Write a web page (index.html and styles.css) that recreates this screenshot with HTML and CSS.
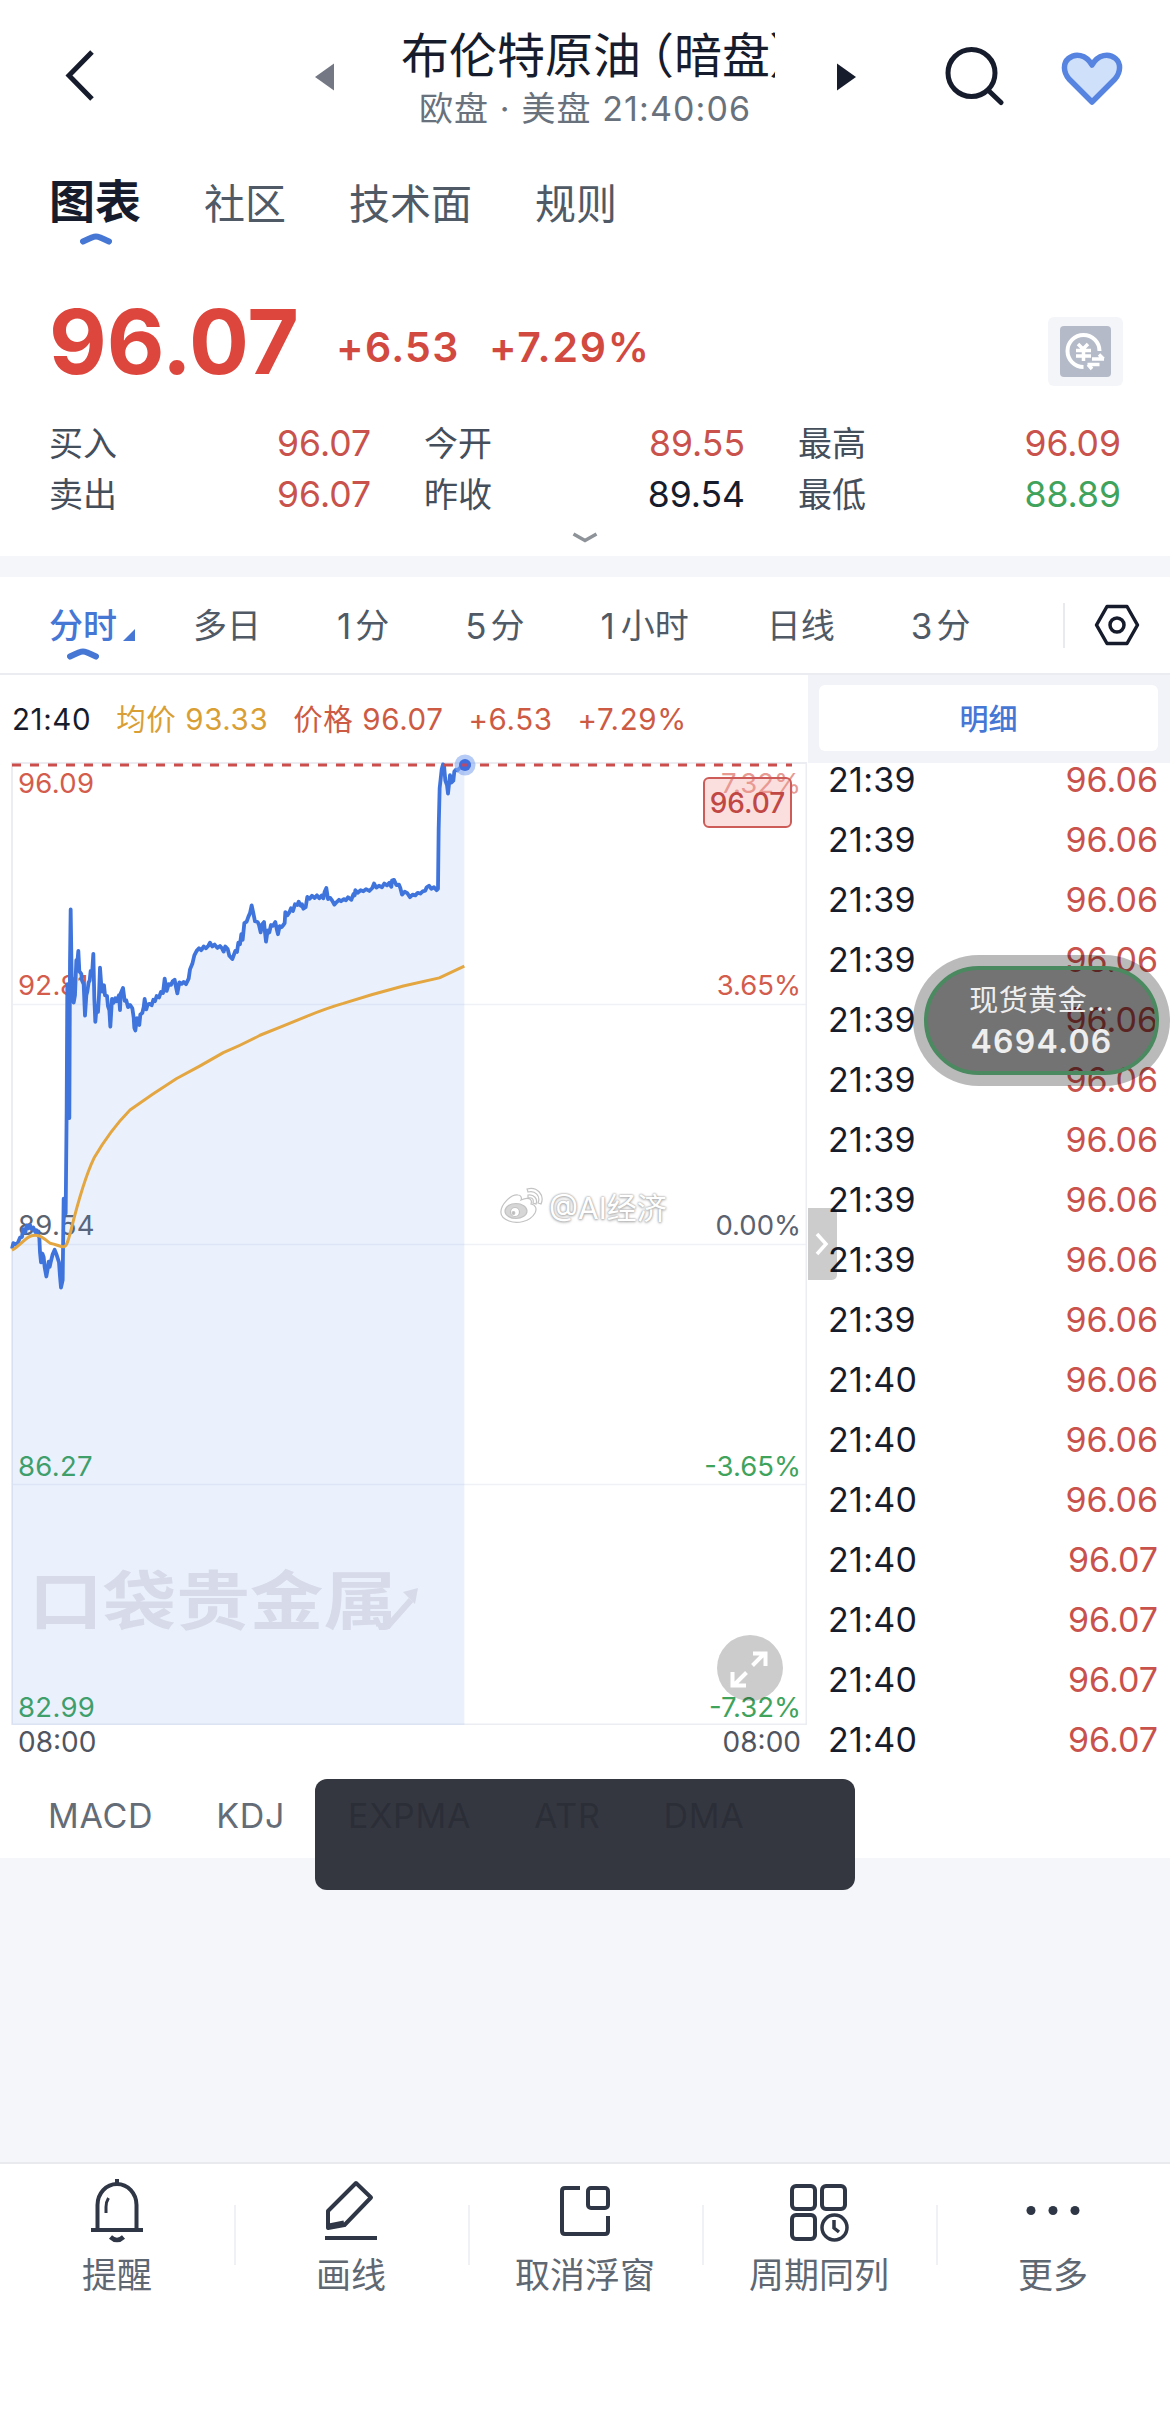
FILE: index.html
```html
<!DOCTYPE html>
<html lang="zh-CN">
<head>
<meta charset="utf-8">
<title>布伦特原油</title>
<link rel="stylesheet" href="styles.css">
</head>
<body>
<div class="app">
  <header class="header">
    <svg class="back" width="40" height="60" viewBox="0 0 40 60"><path d="M31 7 8 30.500 31 54" fill="none" stroke="#171c2c" stroke-width="5"/></svg>
    <svg class="prev" width="20" height="28" viewBox="0 0 20 28"><path d="M19 .5v27L0 14z" fill="#737884"/></svg>
    <div class="heading">
      <div class="title">布伦特原油<span class="paren">（</span>暗盘<span class="paren-end">）</span></div>
      <div class="session">欧盘 · 美盘 21:40:06</div>
    </div>
    <svg class="next" width="20" height="28" viewBox="0 0 20 28"><path d="M1 .5v27L20 14z" fill="#171c2c"/></svg>
    <svg class="search" width="64" height="64" viewBox="0 0 64 64" fill="none" stroke="#171c2c" stroke-width="5" stroke-linecap="round"><circle cx="29.500" cy="31" r="23.500"/><path d="m47.500 49.500 11.500 11"/></svg>
    <svg class="heart" width="64" height="58" viewBox="0 0 64 58"><path d="M32 52 9 29C3 22 3 13 8.500 8.500 15 3 26 4 32 15 38 4 49 3 55.500 8.500 61 13 61 22 55 29z" fill="#cfe0fb" stroke="#5684e0" stroke-width="5.500" stroke-linejoin="round"/></svg>
  </header>

  <nav class="tabs">
    <span class="tab active">图表<svg class="caret" width="32" height="12" viewBox="0 0 32 12"><path d="M3 8.500Q13 3.500 16 3.500T29 8.500" fill="none" stroke="#4677d5" stroke-width="6" stroke-linecap="round"/></svg></span>
    <span class="tab">社区</span><span class="tab">技术面</span><span class="tab">规则</span>
  </nav>

  <section class="quote">
    <div class="price-row">
      <span class="price">96.07</span><span class="change">+6.53</span><span class="change pct">+7.29%</span>
      <div class="convert">
        <svg width="51" height="51" viewBox="0 0 51 51"><rect width="51" height="51" rx="4" fill="#b4bac8"/><g fill="none" stroke="#fff"><path d="M23.500 41A16 16 0 1 1 39.500 25" stroke-width="4"/><path d="m18 18 5 5 5-5M16 24.500h15M16 30h15M23.500 23v12" stroke-width="3.500"/><path d="M27.500 38.500h12M32 43l-4-4.500M32 33h12M39 28.500l4.500 4.500" stroke-width="3.500"/></g></svg>
      </div>
    </div>
    <div class="stats">
      <div class="stat"><span>买入</span><b class="up">96.07</b></div>
      <div class="stat"><span>今开</span><b class="up">89.55</b></div>
      <div class="stat"><span>最高</span><b class="up">96.09</b></div>
      <div class="stat"><span>卖出</span><b class="up">96.07</b></div>
      <div class="stat"><span>昨收</span><b>89.54</b></div>
      <div class="stat"><span>最低</span><b class="down">88.89</b></div>
    </div>
    <svg class="more-stats" width="28" height="14" viewBox="0 0 28 14"><path d="M2.500 3 14 9.500 25.500 3" fill="none" stroke="#8d9399" stroke-width="3.500"/></svg>
  </section>

  <nav class="periods">
    <span class="period active">分时<i class="corner"></i><svg class="caret" width="32" height="12" viewBox="0 0 32 12"><path d="M3 8.500Q13 3.500 16 3.500T29 8.500" fill="none" stroke="#4677d5" stroke-width="6" stroke-linecap="round"/></svg></span>
    <span class="period">多日</span><span class="period"><i class="num">1</i>分</span><span class="period"><i class="num">5</i>分</span><span class="period"><i class="num">1</i>小时</span><span class="period">日线</span><span class="period"><i class="num">3</i>分</span>
    <span class="settings"><svg width="46" height="44" viewBox="0 0 46 44" fill="none" stroke="#171c2c" stroke-width="3.500" stroke-linejoin="round"><path d="M13 3.500h20L43.500 22 33 40.500H13L2.500 22z"/><circle cx="23" cy="22" r="7"/></svg></span>
  </nav>

  <main class="market">
    <section class="chart-panel">
      <div class="legend">
        <span class="now">21:40</span><span class="avg">均价 93.33</span><span class="last">价格 96.07</span><span class="last">+6.53</span><span class="last">+7.29%</span>
      </div>
      <div class="chart">
        <svg class="logo-arrow" width="40" height="42" viewBox="0 0 40 42"><path d="M1 38h7L31 12" fill="none" stroke="#d7dae8" stroke-width="6"/><path d="M23 4 38 0 35 16z" fill="#d7dae8"/></svg>
        <div class="axis left">
          <span class="up">96.09</span><span class="up">92.81</span><span>89.54</span><span class="down">86.27</span><span class="down">82.99</span>
        </div>
        <div class="axis right">
          <span class="up faint">7.32%</span><span class="up">3.65%</span><span>0.00%</span><span class="down">-3.65%</span><span class="down">-7.32%</span>
        </div>
        <svg class="plot" width="807" height="985" viewBox="0 740 807 985">
          <path d="M12 1004.500H806M12 1244.500H806M12 1484.500H806" stroke="#f0f1f6" stroke-width="1.500"/>
          <path d="M12 763V1724.500H806.500V763z" fill="none" stroke="#ebedf3" stroke-width="2"/>
          <g transform="translate(0 740) scale(.33333 .36997)" fill="none" stroke-linejoin="round">
            <path class="area" d="M36 1375 42 1362 52 1360 60 1345 66 1343 72 1320 80 1312 90 1311 100 1318 110 1325 118 1345 120 1385 124 1412 127 1388 134 1425 139 1450 146 1410 152 1412 158 1390 164 1378 170 1392 177 1412 183 1480 188 1460 191 1240 197 1280 200 1000 202 660 208 1022 212 458 221 710 225 690 229 595 235 570 238 625 246 650 255 745 259 690 266 655 272 624 276 625 280 578 286 762 294 735 300 615 307 670 312 663 318 690 324 700 331 775 336 710 350 700 357 690 360 730 362 685 369 670 374 705 384 715 397 718 401 750 406 785 411 768 418 770 423 730 435 705 445 718 455 712 465 695 475 692 487 680 494 645 500 675 510 655 524 648 532 685 538 655 558 655 566 640 575 605 590 570 610 562 630 550 650 557 670 565 680 560 697 592 706 570 715 550 727 530 735 495 745 478 755 447 765 490 775 492 782 520 790 492 798 545 805 510 826 492 834 525 842 500 850 502 858 465 870 462 878 455 890 440 900 442 910 455 922 424 945 422 965 425 979 400 984 428 995 430 1003 445 1015 434 1035 430 1055 430 1066 408 1085 408 1110 404 1122 390 1145 392 1170 390 1180 380 1190 390 1200 395 1210 418 1220 412 1230 425 1260 415 1275 405 1287 395 1300 400 1314 402 1319 130 1325 80 1332 66 1336 110 1344 145 1350 100 1360 110 1368 80 1380 75 1393 67V2662H36z"/>
            <path class="line" vector-effect="non-scaling-stroke" d="M36 1375 40 1360 48 1364 54 1358 60 1345 66 1343 69 1322 76 1330 80 1312 85 1320 90 1311 95 1322 100 1318 106 1330 110 1325 118 1345 120 1385 123 1412 127 1388 131 1398 134 1425 139 1450 143 1430 146 1410 149 1424 152 1412 158 1390 164 1378 170 1392 177 1412 180 1450 183 1480 188 1460 191 1240 197 1280 200 1000 202 660 205 800 208 1022 210 600 212 458 215 640 221 710 225 690 229 595 232 600 235 570 238 625 244 632 246 650 251 660 255 745 259 690 262 680 266 655 269 650 272 624 276 635 280 578 283 700 286 762 290 720 294 735 297 690 300 615 304 665 307 680 312 663 315 690 321 692 324 720 328 730 331 775 336 700 341 710 346 698 350 706 357 690 360 730 362 685 369 670 374 705 379 704 384 722 390 716 397 725 401 750 403 778 406 785 411 752 414 765 418 770 421 742 427 738 431 722 434 700 439 728 443 715 449 713 455 717 460 702 465 706 470 692 477 696 483 681 489 684 494 645 500 678 506 660 513 662 518 652 524 648 528 668 532 685 538 655 545 659 551 654 558 660 566 645 570 620 577 605 583 582 590 570 597 563 604 568 611 558 618 563 625 556 630 548 637 558 644 553 652 562 660 557 666 563 671 572 676 558 683 565 688 583 697 592 706 570 711 573 715 548 720 552 724 525 728 540 733 495 740 491 745 478 750 468 755 447 760 468 765 490 773 492 777 500 782 520 787 498 792 492 795 520 798 545 803 515 808 520 813 500 819 502 826 492 830 510 834 525 839 503 845 506 850 500 854 495 856 465 862 474 868 466 873 455 879 462 885 444 892 446 896 437 902 448 906 444 910 456 917 452 922 424 929 429 936 421 944 427 951 420 958 428 965 420 970 428 974 410 979 400 984 430 991 427 997 435 1003 445 1010 438 1017 432 1023 436 1031 430 1038 433 1044 425 1054 432 1060 417 1064 420 1066 406 1073 413 1082 406 1090 409 1098 403 1108 408 1117 400 1122 388 1129 399 1137 394 1146 398 1153 388 1161 393 1168 386 1174 397 1176 380 1182 378 1189 392 1197 391 1201 400 1206 418 1214 410 1222 414 1230 425 1238 418 1246 420 1253 413 1261 415 1268 409 1276 407 1280 398 1287 394 1294 402 1302 398 1310 406 1314 402 1316 240 1319 130 1325 80 1329 66 1332 68 1336 110 1341 122 1344 145 1350 95 1354 115 1360 110 1363 85 1368 80 1372 82 1380 75 1393 67"/>
            <path d="M36 1379C60 1368 75 1345 95 1340S125 1343 150 1360C170 1363 180 1370 190 1370 198 1370 202 1363 212 1328Q250 1190 282 1130 330 1055 390 1000 460 955 530 915 600 882 670 845 730 822 780 798 850 773 920 747 980 725 1030 712 1120 686 1210 665L1318 643 1393 611" stroke="#e3a640" stroke-width="3" vector-effect="non-scaling-stroke"/>
          </g>
          <path d="M12 765H792" stroke="#cb4d4c" stroke-width="3" stroke-dasharray="9 9"/>
          <circle cx="465" cy="765" r="10.500" fill="#86a8ee" fill-opacity=".6"/><circle cx="465" cy="765" r="6" fill="#3d6ddc"/><path d="M462 765h5" stroke="#b44c70" stroke-width="3"/>
        </svg>
        <div class="brand">口袋贵金属</div>
        <div class="price-tag">96.07</div>
        <div class="credit">
          <svg width="46" height="38" viewBox="0 0 46 38" fill="#fff" stroke="#c3c3c3" stroke-width="1.200"><path d="M2 26C1 18 12 7 19 8c3 0 4 3 3 5 6-3 12-2 10 4 5 1 6 5 4 9-5 9-18 11-26 8-5-2-8-5-8-8z"/><ellipse cx="17" cy="24" rx="11" ry="7.500" fill="#d6d6d6"/><circle cx="16" cy="25" r="4.500"/><circle cx="14.500" cy="26" r="1.300" fill="#bbb"/><path d="M28 2C38-1 46 8 42 17l-3-1C42 9 36 3 29 5zM29 8c6-1 10 4 8 9l-3-1c1-4-1-6-5-5z"/></svg>
          <span>@AI经济</span>
        </div>
        <svg class="expand" width="66" height="66" viewBox="0 0 66 66"><circle cx="33" cy="33" r="33" fill="#000" fill-opacity=".2"/><path d="M35.500 30.500 48 18M36 18.500h12.500V31M29.500 37.500 17 50M15.500 37v13.500H29" fill="none" stroke="#fff" stroke-width="4"/></svg>
      </div>
      <div class="dates"><span>08:00</span><span>08:00</span></div>
    </section>

    <aside class="ticks">
      <div class="ticks-head"><span>明细</span></div>
      <div class="tick-list">
        <div class="tick"><span>21:39</span><b>96.06</b></div>
        <div class="tick"><span>21:39</span><b>96.06</b></div>
        <div class="tick"><span>21:39</span><b>96.06</b></div>
        <div class="tick"><span>21:39</span><b>96.06</b></div>
        <div class="tick"><span>21:39</span><b>96.06</b></div>
        <div class="tick"><span>21:39</span><b>96.06</b></div>
        <div class="tick"><span>21:39</span><b>96.06</b></div>
        <div class="tick"><span>21:39</span><b>96.06</b></div>
        <div class="tick"><span>21:39</span><b>96.06</b></div>
        <div class="tick"><span>21:39</span><b>96.06</b></div>
        <div class="tick"><span>21:40</span><b>96.06</b></div>
        <div class="tick"><span>21:40</span><b>96.06</b></div>
        <div class="tick"><span>21:40</span><b>96.06</b></div>
        <div class="tick"><span>21:40</span><b>96.07</b></div>
        <div class="tick"><span>21:40</span><b>96.07</b></div>
        <div class="tick"><span>21:40</span><b>96.07</b></div>
        <div class="tick"><span>21:40</span><b>96.07</b></div>
      </div>
      <div class="handle"><svg width="14" height="24" viewBox="0 0 14 24"><path d="m2 2 9 10-9 10" fill="none" stroke="#fff" stroke-width="3.500"/></svg></div>
      <div class="float"><div class="float-inner"><span>现货黄金...</span><b>4694.06</b></div></div>
    </aside>
  </main>

  <nav class="indicators"><span>MACD</span><span>KDJ</span><span>EXPMA</span><span>ATR</span><span>DMA</span><div class="toast"></div></nav>

  <footer class="toolbar">
    <div class="tool">
      <svg width="60" height="66" viewBox="0 0 60 66" fill="none" stroke="#2f3746" stroke-width="4"><path d="M30 1v6M10.500 52V27a19.500 21 0 0 1 39 0v25M4 52h52"/><path d="M19 35v-6q0-5 2.500-9" stroke-width="3"/><path d="M23.500 59q6.500 6 13 0" stroke-width="4.500"/></svg>
      <span>提醒</span>
    </div>
    <div class="tool">
      <svg width="60" height="66" viewBox="0 0 60 66" fill="none" stroke="#2f3746" stroke-width="4" stroke-linejoin="round"><path d="M35 5 50 19.500 23.500 47 7 50 7 33zM4 60h52"/><path d="m8 48 15-3" stroke-width="5"/></svg>
      <span>画线</span>
    </div>
    <div class="tool">
      <svg width="60" height="66" viewBox="0 0 60 66" fill="none" stroke="#2f3746" stroke-width="4"><path d="M25 10H10q-3 0-3 3v40q0 3 3 3h40q3 0 3-3V38"/><rect x="33" y="10" width="20" height="20" rx="3"/></svg>
      <span>取消浮窗</span>
    </div>
    <div class="tool">
      <svg width="60" height="66" viewBox="0 0 60 66" fill="none" stroke="#2f3746" stroke-width="4"><rect x="3" y="8" width="23" height="23" rx="4"/><rect x="33" y="8" width="23" height="23" rx="4"/><rect x="3" y="37" width="23" height="24" rx="4"/><circle cx="45.500" cy="49.500" r="12.500" stroke-width="3.500"/><path d="M45 42v8l5 4" stroke-width="3.500"/></svg>
      <span>周期同列</span>
    </div>
    <div class="tool">
      <svg width="60" height="66" viewBox="0 0 60 66" fill="#2f3746"><circle cx="8" cy="32.500" r="4.500"/><circle cx="30" cy="32.500" r="4.500"/><circle cx="52" cy="32.500" r="4.500"/></svg>
      <span>更多</span>
    </div>
  </footer>
</div>
</body>
</html>
```

FILE: styles.css
```css
* { box-sizing: border-box; }
body { margin: 0; background: #f5f6fa; font-family: Inter, "Noto Sans CJK SC", sans-serif; color: #171c2c; line-height: 1; }
svg { display: block; flex: none; }
b, i { font-weight: 400; font-style: normal; }
.app { width: 1170px; height: 2411px; display: flex; flex-direction: column; overflow: hidden; }
.up { color: #c9524c; }
.down { color: #3fa35c; }

.header { height: 150px; background: #fff; display: flex; align-items: flex-start; }
.back { margin: 45px 0 0 61px; }
.prev { margin: 63px 0 0 214px; }
.heading { width: 374px; margin: 29px 0 0 66px; white-space: nowrap; }
.title { font-size: 48px; line-height: 54px; overflow: hidden; }
.paren { margin-left: -15px; }
.paren-end { margin-left: -1px; }
.session { margin-top: 9px; padding-left: 18px; font-size: 34px; line-height: 34px; letter-spacing: 1.100px; color: #69727c; }
.next { margin: 63px 0 0 61px; }
.search { margin: 42px 0 0 86px; }
.heart { margin: 50px 0 0 54px; }

.tabs { height: 130px; background: #fff; padding: 0 49px; display: flex; gap: 63px; }
.tab { position: relative; height: 108px; display: flex; align-items: center; font-size: 41px; color: #505a66; }
.tab.active { font-size: 46px; font-weight: 700; color: #171c2c; padding-bottom: 7px; }
.tab .caret { position: absolute; left: 31px; top: 83px; }

.quote { height: 276px; background: #fff; padding: 17px 49px 0; position: relative; }
.price-row { height: 112px; display: flex; align-items: flex-start; color: #dd463d; }
.price { font-size: 89px; line-height: 90px; font-weight: 700; margin: 0; width: 287px; }
.change { font-size: 41px; line-height: 40px; font-weight: 600; margin-top: 30px; width: 153px; letter-spacing: 1.300px; color: #d2493f; white-space: nowrap; }
.pct { letter-spacing: 1.800px; }
.convert { width: 75px; height: 69px; margin: 20px -2px 0 auto; border-radius: 6px; background: #f4f5f9; display: flex; align-items: center; justify-content: center; }
.stats { margin-top: 9px; display: grid; grid-template-columns: 322px 321px 323px; column-gap: 53px; }
.stat { height: 51px; display: flex; align-items: center; justify-content: space-between; font-size: 34px; color: #454e5b; }
.stat b { font-size: 35.500px; color: #171c2c; }
.stat b.up { color: #c9524c; }
.stat b.down { color: #3fa35c; }
.more-stats { margin: 11px auto 0; }

.periods { height: 98px; margin-top: 21px; background: #fff; border-bottom: 2px solid #ebecf1; padding-left: 49px; display: flex; align-items: center; gap: 76px; }
.period { position: relative; height: 100%; display: flex; align-items: center; padding-top: 2px; font-size: 34px; color: #505a66; white-space: nowrap; }
.num { margin-right: 4px; font-size: 35px; }
.period:nth-child(4) .num { margin-left: 0; }
.period:nth-child(5) .num { margin: 0 6px 0 0; }
.period:nth-child(6) { margin-left: 2px; }
.period.active { color: #4677d5; font-weight: 500; }
.period .caret { position: absolute; left: 18px; top: 71px; }
.corner { position: absolute; left: 74px; top: 52px; width: 12px; height: 12px; background: #4677d5; clip-path: polygon(100% 0, 100% 100%, 0 100%); }
.settings { margin-left: auto; padding: 0 30px 0 29px; border-left: 2px solid #e8eaee; height: 45px; display: flex; align-items: center; }

.market { height: 1095px; background: #fff; display: flex; }
.chart-panel { width: 808px; }
.legend { height: 88px; display: flex; align-items: center; gap: 25px; padding: 1px 0 0 12px; font-size: 29.500px; letter-spacing: .6px; white-space: nowrap; }
.avg { color: #d99f35; }
.last { color: #cd5a43; }
.chart { position: relative; height: 962px; }
.plot { position: absolute; left: 0; top: -23px; }
.area { fill: #3f7cf0; fill-opacity: .11; }
.line { fill: none; stroke: #3f74dc; stroke-width: 3.800px; }
.axis { position: absolute; top: 6px; height: 952px; font-size: 27.500px; line-height: 28px; letter-spacing: .3px; color: #5b626f; }
.axis span { position: absolute; white-space: nowrap; }
.axis.left { left: 18px; }
.axis.right { right: 7px; }
.axis.right span { right: 0; letter-spacing: 0; }
.axis .up { color: #d35c4c; }
.axis .down { color: #3fa35c; }
.axis .faint { color: #e79a92; }
.axis span:nth-child(2) { top: 202px; }
.axis span:nth-child(3) { top: 442px; }
.axis span:nth-child(4) { top: 683px; }
.axis span:nth-child(5) { top: 924px; }
.brand { position: absolute; left: 29px; top: 806px; font-size: 64px; line-height: 64px; font-weight: 700; color: #d7dae8; transform: scaleX(1.150); transform-origin: 0 50%; white-space: nowrap; }
.logo-arrow { position: absolute; left: 380px; top: 825px; z-index: 1; }
.price-tag { position: absolute; left: 703px; top: 14px; width: 89px; height: 51px; border: 2px solid #cd5b57; border-radius: 6px; background: rgba(240,150,145,.3); color: #c04744; font-size: 28px; line-height: 48px; text-align: center; font-weight: 500; }
.credit { position: absolute; left: 499px; top: 424px; display: flex; gap: 4px; align-items: center; font-size: 30px; color: #fff; text-shadow: 0 0 2px #aaa, 0 0 2px #bbb, 0 1px 3px #aaa; white-space: nowrap; }
.credit span { padding-top: 3px; }
.expand { position: absolute; left: 717px; top: 872px; }
.dates { height: 34px; padding: 0 7px 0 18px; display: flex; align-items: center; justify-content: space-between; font-size: 28px; color: #50555f; }

.ticks { position: relative; flex: 1; }
.ticks-head { height: 88px; background: #f2f3f8; padding: 10px 12px 12px 11px; }
.ticks-head span { height: 66px; padding-top: 2px; border-radius: 6px; background: #fff; display: flex; align-items: center; justify-content: center; font-size: 29px; font-weight: 500; color: #4677d5; }
.tick-list { padding: 0 12px 0 20px; margin-top: -13px; }
.tick { height: 60px; display: flex; align-items: center; justify-content: space-between; font-size: 34px; }
.tick span { letter-spacing: .3px; }
.tick b { color: #c9524c; }
.handle { position: absolute; left: 0; top: 533px; width: 29px; height: 72px; background: rgba(0,0,0,.2); border-radius: 0 5px 5px 0; display: flex; align-items: center; padding-left: 7px; }
.float { position: absolute; left: 105px; top: 280px; width: 257px; height: 131px; border-radius: 66px; padding: 11px; background: rgba(0,0,0,.27); }
.float-inner { height: 109px; border-radius: 55px; border: 4px solid #4b8a60; background: rgba(0,0,0,.38); color: #eee; display: flex; flex-direction: column; align-items: center; gap: 11px; padding-top: 16px; }
.float-inner span { font-size: 29px; line-height: 29px; letter-spacing: .5px; }
.float-inner b { font-size: 32px; line-height: 32px; font-weight: 600; letter-spacing: 1.200px; }

.indicators { position: relative; height: 88px; background: #fff; padding: 4px 0 0 48px; display: flex; align-items: center; gap: 63px; font-size: 34px; letter-spacing: .7px; color: #646c77; }
.toast { position: absolute; left: 315px; top: 9px; width: 540px; height: 111px; border-radius: 12px; background: rgba(39,42,51,.94); }

.toolbar { margin-top: auto; height: 249px; background: #fff; border-top: 2px solid #e9eaed; display: grid; grid-template-columns: repeat(5, 1fr); }
.tool { position: relative; height: 160px; padding-top: 14px; display: flex; flex-direction: column; align-items: center; gap: 14px; font-size: 35px; color: #5f6872; }
.tool + .tool::before { content: ""; position: absolute; left: 0; top: 41px; width: 2px; height: 60px; background: #f0f1f4; }
```
